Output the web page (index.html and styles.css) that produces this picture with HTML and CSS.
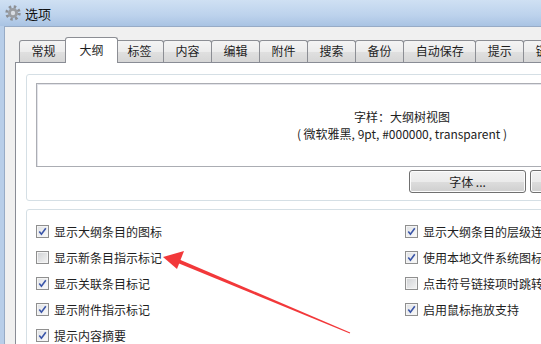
FILE: index.html
```html
<!DOCTYPE html>
<html lang="zh-CN">
<head>
    <meta charset="UTF-8">
    <meta name="viewport" content="width=device-width, initial-scale=1.0">
    <title>选项</title>
    <link rel="stylesheet" href="styles.css">
</head>
<body>
    <div class="window">
        <div class="titlebar">
            <svg class="app-icon" width="16" height="16" viewBox="0 0 16 16">
                <circle cx="8" cy="8" r="6.2" fill="none" stroke="#8d9095" stroke-width="3" stroke-dasharray="2.4 2.47"/>
                <circle cx="8" cy="8" r="5" fill="#9a9da2"/>
                <circle cx="8" cy="8" r="2.2" fill="#d9dde3"/>
            </svg>
            <span class="title">选项</span>
        </div>

        <div class="client">
            <div class="tabs">
                <div class="tab">常规</div>
                <div class="tab active">大纲</div>
                <div class="tab">标签</div>
                <div class="tab">内容</div>
                <div class="tab">编辑</div>
                <div class="tab">附件</div>
                <div class="tab">搜索</div>
                <div class="tab">备份</div>
                <div class="tab">自动保存</div>
                <div class="tab">提示</div>
                <div class="tab">链接</div>
            </div>

            <div class="tab-page">
                <div class="group preview-group">
                    <div class="preview">
                        <div>字样：大纲树视图</div>
                        <div>( 微软雅黑, 9pt, #000000, transparent )</div>
                    </div>
                    <div class="buttons">
                        <button class="btn">字体 ...</button>
                        <button class="btn">颜色 ...</button>
                        <button class="btn">背景 ...</button>
                    </div>
                </div>

                <div class="group options">
                    <div class="col col-left">
                        <label class="opt"><span class="cb checked"><svg width="11" height="11" viewBox="0 0 11 11"><path d="M2.3 5.6 L4.4 8.2 L8.8 2.2" fill="none" stroke="#3a55a8" stroke-width="1.6"/></svg></span>显示大纲条目的图标</label>
                        <label class="opt"><span class="cb"></span>显示新条目指示标记</label>
                        <label class="opt"><span class="cb checked"><svg width="11" height="11" viewBox="0 0 11 11"><path d="M2.3 5.6 L4.4 8.2 L8.8 2.2" fill="none" stroke="#3a55a8" stroke-width="1.6"/></svg></span>显示关联条目标记</label>
                        <label class="opt"><span class="cb checked"><svg width="11" height="11" viewBox="0 0 11 11"><path d="M2.3 5.6 L4.4 8.2 L8.8 2.2" fill="none" stroke="#3a55a8" stroke-width="1.6"/></svg></span>显示附件指示标记</label>
                        <label class="opt"><span class="cb checked"><svg width="11" height="11" viewBox="0 0 11 11"><path d="M2.3 5.6 L4.4 8.2 L8.8 2.2" fill="none" stroke="#3a55a8" stroke-width="1.6"/></svg></span>提示内容摘要</label>
                    </div>
                    <div class="col">
                        <label class="opt"><span class="cb checked"><svg width="11" height="11" viewBox="0 0 11 11"><path d="M2.3 5.6 L4.4 8.2 L8.8 2.2" fill="none" stroke="#3a55a8" stroke-width="1.6"/></svg></span>显示大纲条目的层级连线</label>
                        <label class="opt"><span class="cb checked"><svg width="11" height="11" viewBox="0 0 11 11"><path d="M2.3 5.6 L4.4 8.2 L8.8 2.2" fill="none" stroke="#3a55a8" stroke-width="1.6"/></svg></span>使用本地文件系统图标</label>
                        <label class="opt"><span class="cb"></span>点击符号链接项时跳转到目标</label>
                        <label class="opt"><span class="cb checked"><svg width="11" height="11" viewBox="0 0 11 11"><path d="M2.3 5.6 L4.4 8.2 L8.8 2.2" fill="none" stroke="#3a55a8" stroke-width="1.6"/></svg></span>启用鼠标拖放支持</label>
                    </div>
                </div>
            </div>
        </div>

        <!-- annotation arrow drawn over the dialog -->
        <svg class="arrow" width="541" height="344" viewBox="0 0 541 344">
            <polygon points="177.2,262.8 178.8,259.2 350.2,332.4 349.8,333.6" fill="#f2383a"/>
            <polygon points="163,257 184,251 177,269" fill="#f2383a"/>
        </svg>
    </div>
</body>
</html>
```

FILE: styles.css
```css
body {
    margin: 0;
    width: 541px;
    height: 344px;
    overflow: hidden;
    background-color: #f0f0f0;
    font-family: "Noto Sans CJK SC", "Microsoft YaHei", sans-serif;
    font-size: 12px;
    color: #1e1e1e;
}

.window {
    position: relative;
    width: 900px;
}

.titlebar {
    height: 26px;
    display: flex;
    align-items: center;
    gap: 4px;
    padding-left: 5px;
    background: linear-gradient(#cfe0f3, #bcd2ec 60%, #a9c3e3);
}

.title {
    font-size: 13px;
    color: #111;
}

.client {
    border-left: 4px solid #b8cee9;
    box-shadow: inset 1px 1px #97abc6;
    padding: 11px 0 0 11px;
    background-color: #f0f0f0;
}

/* tab strip */
.tabs {
    display: flex;
    align-items: flex-end;
    height: 26px;
    padding-left: 5px;
    margin-bottom: -1px;
    position: relative;
    z-index: 1;
}

.tab {
    box-sizing: border-box;
    height: 22px;
    line-height: 20px;
    padding: 0 11.5px;
    margin: 0 0 1px -1px;
    border: 1px solid #8c8e94;
    border-bottom: none;
    border-radius: 3px 3px 0 0;
    background: linear-gradient(#f4f4f4, #ececec 50%, #e0e0e0 51%, #d6d6d6);
    white-space: nowrap;
}

.tab.active {
    height: 26px;
    line-height: 24px;
    padding: 0 13.5px;
    margin: 0 -2px 0 -3px;
    background: #fff;
    position: relative;
    z-index: 2;
}

.tab-page {
    height: 400px;
    border: 1px solid #898c95;
    background-color: #fff;
    padding: 11px 10px 0 10px;
}

/* group boxes */
.group {
    border: 1px solid #d5dfe5;
    border-radius: 3px;
}

.preview-group {
    width: 750px;
    padding: 8px 8px 7px 9px;
}

.preview {
    width: 730px;
    height: 82px;
    border: 1px solid #abadb3;
    box-shadow: inset 1px 1px #e3e4ea;
    display: flex;
    flex-direction: column;
    justify-content: center;
    align-items: center;
    line-height: 17px;
    color: #222;
}

.buttons {
    width: 732px;
    display: flex;
    justify-content: flex-end;
    gap: 4px;
    margin-top: 3px;
}

.btn {
    width: 117px;
    height: 23px;
    padding: 0;
    border: 1px solid #707070;
    border-radius: 3px;
    background: linear-gradient(#f2f2f2, #ebebeb 50%, #dddddd 51%, #cfcfcf);
    box-shadow: inset 0 0 0 1px #fcfcfc;
    font-family: inherit;
    font-size: 12px;
    color: #1e1e1e;
}

/* option checkboxes */
.options {
    width: 750px;
    margin-top: 8px;
    padding: 8px 0 20px 9px;
    display: flex;
}

.col {
    display: flex;
    flex-direction: column;
}

.col-left {
    width: 369px;
}

.opt {
    height: 26px;
    display: flex;
    align-items: center;
    gap: 5px;
    white-space: nowrap;
}

.cb {
    box-sizing: border-box;
    width: 13px;
    height: 13px;
    border: 1px solid #8f8f8f;
    background: linear-gradient(135deg, #cfd1d4, #f4f4f4);
    box-shadow: inset 0 0 0 1px #f4f4f4;
    display: flex;
    align-items: center;
    justify-content: center;
}

.cb.checked {
    background: linear-gradient(135deg, #dfe1e4, #fbfbfb);
}

.arrow {
    position: absolute;
    top: 0;
    left: 0;
    pointer-events: none;
    z-index: 5;
}
```
